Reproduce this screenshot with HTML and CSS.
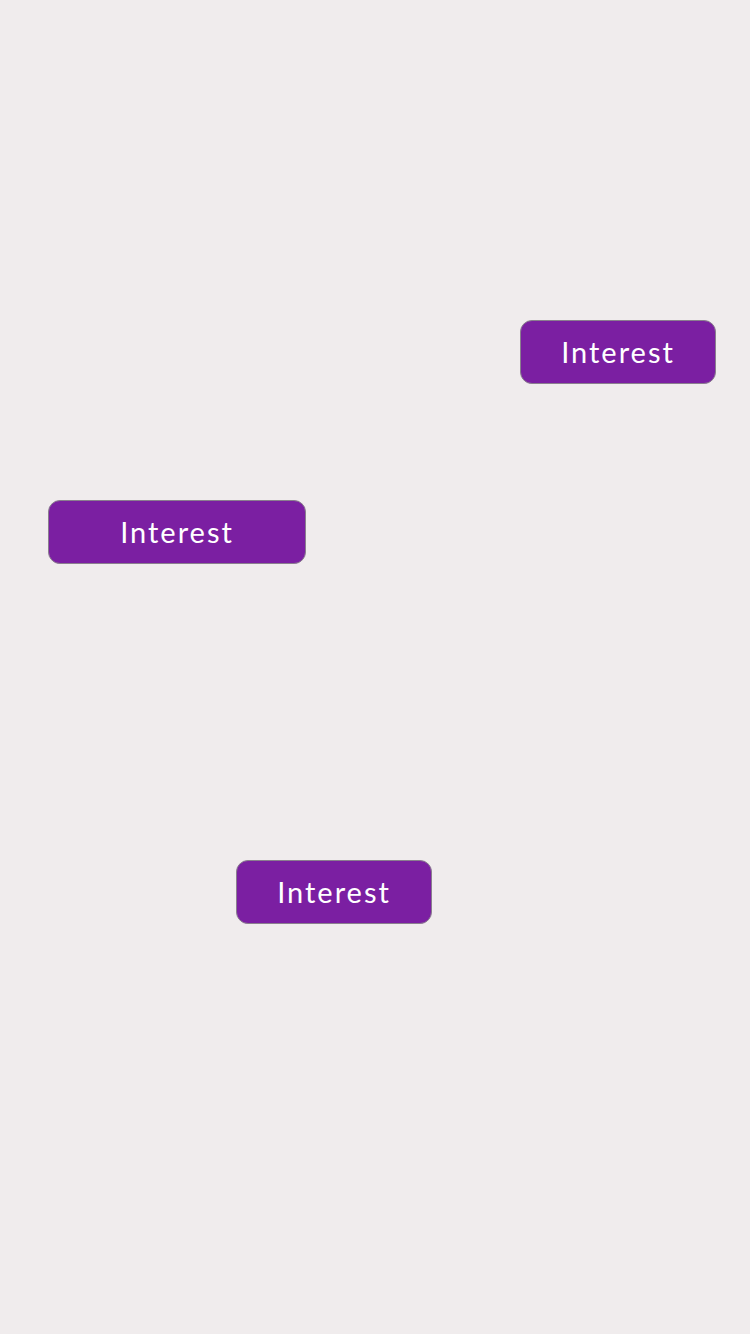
FILE: index.html
```html
<!DOCTYPE html>
<html>
<head>
<meta charset="utf-8">
<link rel="stylesheet" href="styles.css">
</head>
<body>
<div class="canvas">
  <button class="tag tag-a">Interest</button>
  <button class="tag tag-b">Interest</button>
  <button class="tag tag-c">Interest</button>
</div>
</body>
</html>
```
FILE: styles.css
```css
html, body {
  margin: 0;
  padding: 0;
  background: #f0eced;
}
.canvas {
  position: relative;
  width: 750px;
  height: 1334px;
  background: #f0eced;
}
.tag {
  position: absolute;
  box-sizing: border-box;
  height: 64px;
  margin: 0;
  padding: 0 0 1px 0;
  border: 1px solid #8a7f8e;
  border-radius: 12px;
  background: #7b1fa2;
  color: #ffffff;
  font-family: Lato, "Open Sans", sans-serif;
  font-weight: 400;
  font-size: 29px;
  letter-spacing: 2px;
  display: flex;
  align-items: center;
  justify-content: center;
}
.tag-a { left: 520px; top: 320px; width: 196px; }
.tag-b { left: 48px; top: 500px; width: 258px; }
.tag-c { left: 236px; top: 860px; width: 196px; }
```
